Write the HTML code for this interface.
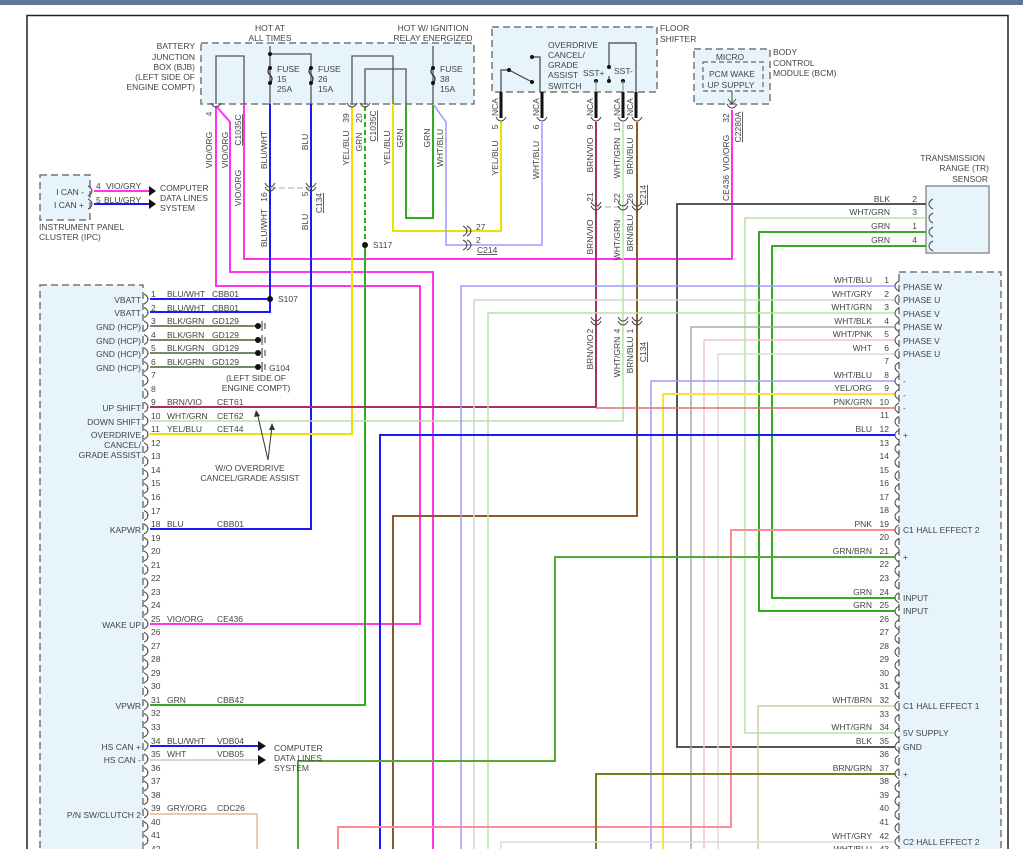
<!DOCTYPE html>
<html><head><meta charset="utf-8"><style>
html,body{margin:0;padding:0;background:#fff;width:1023px;height:849px;overflow:hidden}
svg{display:block}
text{font-family:"Liberation Sans",sans-serif;font-size:8.5px;fill:#444}
.r{text-anchor:end}.m{text-anchor:middle}
.box{fill:#e8f4fb;stroke:#777;stroke-width:1.5;stroke-dasharray:7 4}
.w{fill:none;stroke-width:2}
.br{fill:none;stroke:#444;stroke-width:1}
</style></head><body>
<svg width="1023" height="849" viewBox="0 0 1023 849" xmlns="http://www.w3.org/2000/svg">
<defs>
<path id="bl" d="M-3,-5 q4,2 4,5 q0,3 -4,5 M1,0 h-1" class="br"/>
<path id="brr" d="M3,-5 q-4,2 -4,5 q0,3 4,5" class="br"/>
<path id="bd" d="M-5,-3 q2,4 5,4 q3,0 5,-4" class="br"/>
</defs>
<rect x="0" y="0" width="1023" height="5" fill="#5d7892"/>
<path d="M27,849 V15.5 H1008 V849" fill="none" stroke="#222" stroke-width="1.5"/>

<!-- boxes -->
<rect class="box" x="201" y="43" width="273" height="61"/>
<rect class="box" x="492" y="27" width="165" height="65"/>
<rect class="box" x="694" y="49" width="76" height="55"/>
<rect x="703" y="62" width="60" height="29" fill="none" stroke="#666" stroke-width="1.2" stroke-dasharray="5 3"/>
<rect class="box" x="40" y="175" width="50" height="45"/>
<rect x="926" y="186" width="63" height="67" fill="#e8f4fb" stroke="#777" stroke-width="1.2"/>
<rect class="box" x="40" y="285" width="103" height="580"/>
<rect class="box" x="899" y="272" width="102" height="590"/>

<!-- BJB internals -->
<g fill="none" stroke="#555" stroke-width="1.3">
<path d="M216,104 V56 H244 V104"/>
<path d="M270,46 V104 M270,54 H311 V104"/>
<path d="M352,104 V56 H393 V104 M365,104 V69 H406 V104"/>
<path d="M433,46 V104"/>
<path d="M270,68 q-4,3 0,7 q4,4 0,8 M311,68 q-4,3 0,7 q4,4 0,8 M433,68 q-4,3 0,7 q4,4 0,8" stroke="#333"/>
</g>
<g fill="#111"><circle cx="270" cy="54" r="2"/><circle cx="270" cy="68" r="2"/><circle cx="270" cy="83" r="2"/><circle cx="311" cy="68" r="2"/><circle cx="311" cy="83" r="2"/><circle cx="433" cy="68" r="2"/><circle cx="433" cy="83" r="2"/></g>
<text class="m" x="270" y="31">HOT AT</text><text class="m" x="270" y="41">ALL TIMES</text>
<text class="m" x="433" y="31">HOT W/ IGNITION</text><text class="m" x="433" y="41">RELAY ENERGIZED</text>
<text class="r" x="195" y="49">BATTERY</text><text class="r" x="195" y="60">JUNCTION</text><text class="r" x="195" y="70">BOX (BJB)</text><text class="r" x="195" y="80">(LEFT SIDE OF</text><text class="r" x="195" y="90">ENGINE COMPT)</text>
<text x="277" y="72">FUSE</text><text x="277" y="82">15</text><text x="277" y="92">25A</text>
<text x="318" y="72">FUSE</text><text x="318" y="82">26</text><text x="318" y="92">15A</text>
<text x="440" y="72">FUSE</text><text x="440" y="82">38</text><text x="440" y="92">15A</text>

<!-- Floor shifter -->
<g fill="none" stroke="#444" stroke-width="1.2">
<path d="M501,92 V70 H509 L532,82 M540,92 V57 H532 M609,67 V43 H636 V92 M609,81 V76"/>
</g>
<g fill="#111"><circle cx="509" cy="70" r="2"/><circle cx="532" cy="82" r="2"/><circle cx="532" cy="57" r="2"/><circle cx="609" cy="67" r="2"/><circle cx="609" cy="81" r="2"/><circle cx="596" cy="81" r="2"/><circle cx="623" cy="81" r="2"/></g>
<path d="M596,81 V92 M623,81 V92" stroke="#999" stroke-width="1.2"/>
<text x="660" y="31">FLOOR</text><text x="660" y="42">SHIFTER</text>
<text x="548" y="48">OVERDRIVE</text><text x="548" y="58">CANCEL/</text><text x="548" y="68">GRADE</text><text x="548" y="78">ASSIST</text><text x="548" y="89">SWITCH</text>
<text x="583" y="76">SST+</text><text x="614" y="74">SST-</text>
<g stroke="#111" stroke-width="3"><path d="M501,92 V118 M542,92 V118 M596,92 V118 M623,92 V118 M636,92 V118"/></g>

<!-- BCM -->
<text x="773" y="55">BODY</text><text x="773" y="66">CONTROL</text><text x="773" y="76">MODULE (BCM)</text>
<text class="m" x="730" y="60">MICRO</text><text class="m" x="732" y="77">PCM WAKE</text><text class="m" x="731" y="88">UP SUPPLY</text>
<path d="M732,91 V104 M728,99 L732,104 L736,99" stroke="#444" fill="none"/>

<!-- TR sensor -->
<text class="r" x="985" y="161">TRANSMISSION</text><text class="r" x="989" y="171">RANGE (TR)</text><text class="r" x="988" y="182">SENSOR</text>

<!-- IPC -->
<text class="r" x="84" y="195">I CAN -</text><text class="r" x="84" y="208">I CAN +</text>
<text x="96" y="189">4</text><text x="106" y="189">VIO/GRY</text><text x="96" y="203">5</text><text x="104" y="203">BLU/GRY</text>
<path d="M94,191 H150 M94,204 H150" stroke="#ff33ee" stroke-width="2"/><path d="M94,204 H150" stroke="#1818ff" stroke-width="2"/>
<path d="M149,186 L156,191 L149,196 Z M149,199 L156,204 L149,209 Z" fill="#111"/>
<text x="160" y="191">COMPUTER</text><text x="160" y="201">DATA LINES</text><text x="160" y="211">SYSTEM</text>
<text x="39" y="230">INSTRUMENT PANEL</text><text x="39" y="240">CLUSTER (IPC)</text>

<!-- WIRES -->
<g class="w">
<!-- VIO/ORG -->
<path d="M216,106 V286 H420 V624 H150" stroke="#ff33ee"/>
<path d="M216,106 L230,122 V272 H433 V849" stroke="#ff33ee"/>
<path d="M244,104 V259 H732 V110" stroke="#ff33ee"/>
<!-- BLU/WHT, BLU -->
<path d="M270,104 V299 H150 M270,299 V312 H150" stroke="#1a1aff"/>
<path d="M311,104 V529 H150" stroke="#1a1aff"/>
<!-- YEL/BLU -->
<path d="M352,106 V434 H150" stroke="#f0e000"/>
<path d="M393,104 V231 H501 V122" stroke="#f0e000"/>
<!-- GRN -->
<path d="M365,106 V245" stroke="#33aa22" stroke-dasharray="5 3"/>
<path d="M365,245 V705 H150" stroke="#33aa22"/>
<path d="M406,104 V218 H433 V104" stroke="#33aa22"/>
<!-- WHT/BLU -->
<path d="M433,104 L446,122 V245 H542 V122" stroke="#9b9bff" stroke-width="1.5"/>
<!-- shifter outputs -->
<path d="M596,122 V407 H150" stroke="#a8306a"/>
<path d="M623,122 V421 H150" stroke="#b8e0a8" stroke-width="1.5"/>
<path d="M637,122 V516 H393 V849" stroke="#8a5a2a"/>
<!-- TR -->
<path d="M926,204 H677 V747 H895" stroke="#555"/>
<path d="M926,218 H745 V733 H895" stroke="#b8e0a8" stroke-width="1.5"/>
<path d="M926,232 H759 V611 H895" stroke="#33aa22"/>
<path d="M926,246 H772 V598 H895" stroke="#33aa22"/>
<!-- right connector -->
<path d="M895,286 H461 V849" stroke="#9b9bff" stroke-width="1.5"/>
<path d="M895,300 H474 V849" stroke="#d6d6d6" stroke-width="1.5"/>
<path d="M895,313 H488 V849" stroke="#b8e0a8" stroke-width="1.5"/>
<path d="M895,327 H691 V849" stroke="#aaa" stroke-width="1.5"/>
<path d="M895,340 H704 V849" stroke="#f0c4cc" stroke-width="1.5"/>
<path d="M895,354 H718 V849" stroke="#dcdcdc" stroke-width="1.5"/>
<path d="M895,381 H651 V849" stroke="#9b9bff" stroke-width="1.5"/>
<path d="M895,394 H663 V849" stroke="#ffe040"/>
<path d="M895,408 H596" stroke="#e07070" stroke-width="1.5"/>
<path d="M895,435 H380 V849" stroke="#1a1aff"/>
<path d="M895,530 H731 V827 H338 V849" stroke="#ff8899"/>
<path d="M895,557 H555 V761 H298 V849" stroke="#55aa33"/>
<path d="M895,706 H758 V849" stroke="#cfc8a8" stroke-width="1.5"/>
<path d="M895,774 H596 V849" stroke="#7a7a20"/>
<path d="M895,842 H501 V849" stroke="#dcdcdc" stroke-width="1.5"/>
<!-- left misc -->
<path d="M150,326 H258 M150,340 H258 M150,353 H258 M150,367 H258" stroke="#778866"/>
<path d="M150,746 H258" stroke="#1a1aff"/>
<path d="M150,760 H258" stroke="#d6d6d6"/>
<path d="M150,814 H257 V849" stroke="#f0c8a8"/>
</g>
<path d="M270,188 H311 M596,207 H623" stroke="#bbb" stroke-width="1.2" stroke-dasharray="6 3"/>
<g fill="#111"><circle cx="270" cy="299" r="3"/><circle cx="365" cy="245" r="3"/>
<circle cx="258" cy="326" r="3"/><circle cx="258" cy="340" r="3"/><circle cx="258" cy="353" r="3"/><circle cx="258" cy="367" r="3"/></g>
<path d="M262,321 v10 M265,323 v6 M262,335 v10 M265,337 v6 M262,348 v10 M265,350 v6 M262,362 v10 M265,364 v6" stroke="#333"/>
<path d="M258,741 L266,746 L258,751 Z M258,755 L266,760 L258,765 Z" fill="#111"/>
<text x="278" y="302">S107</text><text x="373" y="248">S117</text>
<text x="269" y="371">G104</text><text class="m" x="256" y="381">(LEFT SIDE OF</text><text class="m" x="256" y="391">ENGINE COMPT)</text>
<text class="m" x="250" y="471">W/O OVERDRIVE</text><text class="m" x="250" y="481">CANCEL/GRADE ASSIST</text>
<path d="M268,460 L257,412 M268,460 L272,426" stroke="#333"/>
<path d="M254,417 L256,410 L260,416 Z M269,430 L272,423 L275,430 Z" fill="#333"/>
<text x="274" y="751">COMPUTER</text><text x="274" y="761">DATA LINES</text><text x="274" y="771">SYSTEM</text>

<!-- connectors -->
<g>
<use href="#bd" x="216" y="106"/><use href="#bd" x="352" y="106"/><use href="#bd" x="365" y="106"/>
<use href="#bd" x="501" y="120"/><use href="#bd" x="542" y="120"/><use href="#bd" x="596" y="120"/><use href="#bd" x="623" y="120"/><use href="#bd" x="637" y="120"/>
<use href="#bd" x="732" y="107"/>
<use href="#bd" x="270" y="186"/><use href="#bd" x="270" y="190"/><use href="#bd" x="311" y="186"/><use href="#bd" x="311" y="190"/>
<use href="#bd" x="596" y="205"/><use href="#bd" x="596" y="209"/><use href="#bd" x="623" y="205"/><use href="#bd" x="623" y="209"/><use href="#bd" x="637" y="205"/><use href="#bd" x="637" y="209"/>
<use href="#bd" x="596" y="320"/><use href="#bd" x="596" y="324"/><use href="#bd" x="623" y="320"/><use href="#bd" x="623" y="324"/><use href="#bd" x="637" y="320"/><use href="#bd" x="637" y="324"/>
<use href="#bl" x="466" y="231"/><use href="#bl" x="470" y="231"/><use href="#bl" x="466" y="245"/><use href="#bl" x="470" y="245"/>
<use href="#brr" x="930" y="204"/><use href="#brr" x="930" y="218"/><use href="#brr" x="930" y="232"/><use href="#brr" x="930" y="246"/>
<use href="#bl" x="91" y="191"/><use href="#bl" x="91" y="204"/>
</g>
<text x="476" y="230">27</text><text x="476" y="243">2</text><text x="477" y="253" text-decoration="underline">C214</text>

<!-- rotated labels -->
<g>
<text transform="rotate(-90 212 114)" x="212" y="114" class="m">4</text>
<text transform="rotate(-90 212 150)" x="212" y="150" class="m">VIO/ORG</text>
<text transform="rotate(-90 228 150)" x="228" y="150" class="m">VIO/ORG</text>
<text transform="rotate(-90 241 130)" x="241" y="130" class="m" text-decoration="underline">C1035C</text>
<text transform="rotate(-90 241 188)" x="241" y="188" class="m">VIO/ORG</text>
<text transform="rotate(-90 267 150)" x="267" y="150" class="m">BLU/WHT</text>
<text transform="rotate(-90 267 197)" x="267" y="197" class="m">16</text>
<text transform="rotate(-90 267 228)" x="267" y="228" class="m">BLU/WHT</text>
<text transform="rotate(-90 308 142)" x="308" y="142" class="m">BLU</text>
<text transform="rotate(-90 308 194)" x="308" y="194" class="m">5</text>
<text transform="rotate(-90 322 203)" x="322" y="203" class="m" text-decoration="underline">C134</text>
<text transform="rotate(-90 308 222)" x="308" y="222" class="m">BLU</text>
<text transform="rotate(-90 349 118)" x="349" y="118" class="m">39</text>
<text transform="rotate(-90 349 148)" x="349" y="148" class="m">YEL/BLU</text>
<text transform="rotate(-90 362 118)" x="362" y="118" class="m">20</text>
<text transform="rotate(-90 362 142)" x="362" y="142" class="m">GRN</text>
<text transform="rotate(-90 376 126)" x="376" y="126" class="m" text-decoration="underline">C1035C</text>
<text transform="rotate(-90 390 148)" x="390" y="148" class="m">YEL/BLU</text>
<text transform="rotate(-90 403 138)" x="403" y="138" class="m">GRN</text>
<text transform="rotate(-90 430 138)" x="430" y="138" class="m">GRN</text>
<text transform="rotate(-90 443 148)" x="443" y="148" class="m">WHT/BLU</text>
<text transform="rotate(-90 498 107)" x="498" y="107" class="m">NCA</text>
<text transform="rotate(-90 498 127)" x="498" y="127" class="m">5</text>
<text transform="rotate(-90 498 158)" x="498" y="158" class="m">YEL/BLU</text>
<text transform="rotate(-90 539 107)" x="539" y="107" class="m">NCA</text>
<text transform="rotate(-90 539 127)" x="539" y="127" class="m">6</text>
<text transform="rotate(-90 539 160)" x="539" y="160" class="m">WHT/BLU</text>
<text transform="rotate(-90 593 107)" x="593" y="107" class="m">NCA</text>
<text transform="rotate(-90 593 127)" x="593" y="127" class="m">9</text>
<text transform="rotate(-90 593 155)" x="593" y="155" class="m">BRN/VIO</text>
<text transform="rotate(-90 593 197)" x="593" y="197" class="m">21</text>
<text transform="rotate(-90 593 237)" x="593" y="237" class="m">BRN/VIO</text>
<text transform="rotate(-90 593 331)" x="593" y="331" class="m">2</text>
<text transform="rotate(-90 593 352)" x="593" y="352" class="m">BRN/VIO</text>
<text transform="rotate(-90 620 107)" x="620" y="107" class="m">NCA</text>
<text transform="rotate(-90 620 127)" x="620" y="127" class="m">10</text>
<text transform="rotate(-90 620 158)" x="620" y="158" class="m">WHT/GRN</text>
<text transform="rotate(-90 620 198)" x="620" y="198" class="m">22</text>
<text transform="rotate(-90 620 240)" x="620" y="240" class="m">WHT/GRN</text>
<text transform="rotate(-90 620 331)" x="620" y="331" class="m">4</text>
<text transform="rotate(-90 620 357)" x="620" y="357" class="m">WHT/GRN</text>
<text transform="rotate(-90 633 107)" x="633" y="107" class="m">NCA</text>
<text transform="rotate(-90 633 127)" x="633" y="127" class="m">8</text>
<text transform="rotate(-90 633 156)" x="633" y="156" class="m">BRN/BLU</text>
<text transform="rotate(-90 633 198)" x="633" y="198" class="m">26</text>
<text transform="rotate(-90 633 233)" x="633" y="233" class="m">BRN/BLU</text>
<text transform="rotate(-90 633 331)" x="633" y="331" class="m">1</text>
<text transform="rotate(-90 633 355)" x="633" y="355" class="m">BRN/BLU</text>
<text transform="rotate(-90 646 195)" x="646" y="195" class="m" text-decoration="underline">C214</text>
<text transform="rotate(-90 646 352)" x="646" y="352" class="m" text-decoration="underline">C134</text>
<text transform="rotate(-90 729 118)" x="729" y="118" class="m">32</text>
<text transform="rotate(-90 741 127)" x="741" y="127" class="m" text-decoration="underline">C2280A</text>
<text transform="rotate(-90 729 153)" x="729" y="153" class="m">VIO/ORG</text>
<text transform="rotate(-90 729 188)" x="729" y="188" class="m">CE436</text>
</g>

<!-- TR pin labels -->
<text class="r" x="890" y="202">BLK</text><text class="r" x="917" y="202">2</text>
<text class="r" x="890" y="215">WHT/GRN</text><text class="r" x="917" y="215">3</text>
<text class="r" x="890" y="229">GRN</text><text class="r" x="917" y="229">1</text>
<text class="r" x="890" y="243">GRN</text><text class="r" x="917" y="243">4</text>

<!-- left pin brackets -->
<g>
<use href="#bl" x="147" y="299"/><use href="#bl" x="147" y="312.5"/><use href="#bl" x="147" y="326"/><use href="#bl" x="147" y="339.6"/><use href="#bl" x="147" y="353.1"/><use href="#bl" x="147" y="366.7"/><use href="#bl" x="147" y="380.2"/><use href="#bl" x="147" y="393.7"/><use href="#bl" x="147" y="407.2"/><use href="#bl" x="147" y="420.8"/><use href="#bl" x="147" y="434.3"/><use href="#bl" x="147" y="447.8"/><use href="#bl" x="147" y="461.4"/><use href="#bl" x="147" y="474.9"/><use href="#bl" x="147" y="488.4"/><use href="#bl" x="147" y="502"/><use href="#bl" x="147" y="515.5"/><use href="#bl" x="147" y="529"/><use href="#bl" x="147" y="542.5"/><use href="#bl" x="147" y="556.1"/><use href="#bl" x="147" y="569.6"/><use href="#bl" x="147" y="583.1"/><use href="#bl" x="147" y="596.7"/><use href="#bl" x="147" y="610.2"/><use href="#bl" x="147" y="623.7"/><use href="#bl" x="147" y="637.3"/><use href="#bl" x="147" y="650.8"/><use href="#bl" x="147" y="664.3"/><use href="#bl" x="147" y="677.8"/><use href="#bl" x="147" y="691.4"/><use href="#bl" x="147" y="704.9"/><use href="#bl" x="147" y="718.4"/><use href="#bl" x="147" y="732"/><use href="#bl" x="147" y="745.5"/><use href="#bl" x="147" y="759"/><use href="#bl" x="147" y="772.6"/><use href="#bl" x="147" y="786.1"/><use href="#bl" x="147" y="799.6"/><use href="#bl" x="147" y="813.1"/><use href="#bl" x="147" y="826.7"/><use href="#bl" x="147" y="840.2"/>
</g>
<g>
<text x="151" y="297">1</text><text x="151" y="311">2</text><text x="151" y="324">3</text><text x="151" y="338">4</text><text x="151" y="351">5</text><text x="151" y="365">6</text><text x="151" y="378">7</text><text x="151" y="392">8</text><text x="151" y="405">9</text><text x="151" y="419">10</text><text x="151" y="432">11</text><text x="151" y="446">12</text><text x="151" y="459">13</text><text x="151" y="473">14</text><text x="151" y="486">15</text><text x="151" y="500">16</text><text x="151" y="514">17</text><text x="151" y="527">18</text><text x="151" y="541">19</text><text x="151" y="554">20</text><text x="151" y="568">21</text><text x="151" y="581">22</text><text x="151" y="595">23</text><text x="151" y="608">24</text><text x="151" y="622">25</text><text x="151" y="635">26</text><text x="151" y="649">27</text><text x="151" y="662">28</text><text x="151" y="676">29</text><text x="151" y="689">30</text><text x="151" y="703">31</text><text x="151" y="716">32</text><text x="151" y="730">33</text><text x="151" y="744">34</text><text x="151" y="757">35</text><text x="151" y="771">36</text><text x="151" y="784">37</text><text x="151" y="798">38</text><text x="151" y="811">39</text><text x="151" y="825">40</text><text x="151" y="838">41</text><text x="151" y="852">42</text>
</g>
<g>
<text x="167" y="297">BLU/WHT</text><text x="212" y="297">CBB01</text>
<text x="167" y="311">BLU/WHT</text><text x="212" y="311">CBB01</text>
<text x="167" y="324">BLK/GRN</text><text x="212" y="324">GD129</text>
<text x="167" y="338">BLK/GRN</text><text x="212" y="338">GD129</text>
<text x="167" y="351">BLK/GRN</text><text x="212" y="351">GD129</text>
<text x="167" y="365">BLK/GRN</text><text x="212" y="365">GD129</text>
<text x="167" y="405">BRN/VIO</text><text x="217" y="405">CET61</text>
<text x="167" y="419">WHT/GRN</text><text x="217" y="419">CET62</text>
<text x="167" y="432">YEL/BLU</text><text x="217" y="432">CET44</text>
<text x="167" y="527">BLU</text><text x="217" y="527">CBB01</text>
<text x="167" y="622">VIO/ORG</text><text x="217" y="622">CE436</text>
<text x="167" y="703">GRN</text><text x="217" y="703">CBB42</text>
<text x="167" y="744">BLU/WHT</text><text x="217" y="744">VDB04</text>
<text x="167" y="757">WHT</text><text x="217" y="757">VDB05</text>
<text x="167" y="811">GRY/ORG</text><text x="217" y="811">CDC26</text>
</g>
<g>
<text class="r" x="141" y="303">VBATT</text><text class="r" x="141" y="316">VBATT</text>
<text class="r" x="141" y="330">GND (HCP)</text><text class="r" x="141" y="344">GND (HCP)</text><text class="r" x="141" y="357">GND (HCP)</text><text class="r" x="141" y="371">GND (HCP)</text>
<text class="r" x="141" y="411">UP SHIFT</text><text class="r" x="141" y="425">DOWN SHIFT</text><text class="r" x="141" y="438">OVERDRIVE</text><text class="r" x="141" y="448">CANCEL/</text><text class="r" x="141" y="458">GRADE ASSIST</text>
<text class="r" x="141" y="533">KAPWR</text><text class="r" x="141" y="628">WAKE UP</text><text class="r" x="141" y="709">VPWR</text>
<text class="r" x="141" y="750">HS CAN +</text><text class="r" x="141" y="763">HS CAN -</text><text class="r" x="141" y="818">P/N SW/CLUTCH 2</text>
</g>

<!-- right pin brackets -->
<g>
<use href="#brr" x="896" y="286"/><use href="#brr" x="896" y="299.6"/><use href="#brr" x="896" y="313.1"/><use href="#brr" x="896" y="326.7"/><use href="#brr" x="896" y="340.2"/><use href="#brr" x="896" y="353.8"/><use href="#brr" x="896" y="367.3"/><use href="#brr" x="896" y="380.9"/><use href="#brr" x="896" y="394.4"/><use href="#brr" x="896" y="408"/><use href="#brr" x="896" y="421.5"/><use href="#brr" x="896" y="435.1"/><use href="#brr" x="896" y="448.6"/><use href="#brr" x="896" y="462.2"/><use href="#brr" x="896" y="475.7"/><use href="#brr" x="896" y="489.3"/><use href="#brr" x="896" y="502.8"/><use href="#brr" x="896" y="516.4"/><use href="#brr" x="896" y="529.9"/><use href="#brr" x="896" y="543.5"/><use href="#brr" x="896" y="557"/><use href="#brr" x="896" y="570.6"/><use href="#brr" x="896" y="584.1"/><use href="#brr" x="896" y="597.7"/><use href="#brr" x="896" y="611.2"/><use href="#brr" x="896" y="624.8"/><use href="#brr" x="896" y="638.3"/><use href="#brr" x="896" y="651.9"/><use href="#brr" x="896" y="665.4"/><use href="#brr" x="896" y="679"/><use href="#brr" x="896" y="692.5"/><use href="#brr" x="896" y="706.1"/><use href="#brr" x="896" y="719.6"/><use href="#brr" x="896" y="733.2"/><use href="#brr" x="896" y="746.7"/><use href="#brr" x="896" y="760.3"/><use href="#brr" x="896" y="773.8"/><use href="#brr" x="896" y="787.4"/><use href="#brr" x="896" y="800.9"/><use href="#brr" x="896" y="814.5"/><use href="#brr" x="896" y="828"/><use href="#brr" x="896" y="841.6"/>
</g>
<g class="r">
<text class="r" x="889" y="283">1</text><text class="r" x="889" y="297">2</text><text class="r" x="889" y="310">3</text><text class="r" x="889" y="324">4</text><text class="r" x="889" y="337">5</text><text class="r" x="889" y="351">6</text><text class="r" x="889" y="364">7</text><text class="r" x="889" y="378">8</text><text class="r" x="889" y="391">9</text><text class="r" x="889" y="405">10</text><text class="r" x="889" y="418">11</text><text class="r" x="889" y="432">12</text><text class="r" x="889" y="446">13</text><text class="r" x="889" y="459">14</text><text class="r" x="889" y="473">15</text><text class="r" x="889" y="486">16</text><text class="r" x="889" y="500">17</text><text class="r" x="889" y="513">18</text><text class="r" x="889" y="527">19</text><text class="r" x="889" y="540">20</text><text class="r" x="889" y="554">21</text><text class="r" x="889" y="567">22</text><text class="r" x="889" y="581">23</text><text class="r" x="889" y="595">24</text><text class="r" x="889" y="608">25</text><text class="r" x="889" y="622">26</text><text class="r" x="889" y="635">27</text><text class="r" x="889" y="649">28</text><text class="r" x="889" y="662">29</text><text class="r" x="889" y="676">30</text><text class="r" x="889" y="689">31</text><text class="r" x="889" y="703">32</text><text class="r" x="889" y="717">33</text><text class="r" x="889" y="730">34</text><text class="r" x="889" y="744">35</text><text class="r" x="889" y="757">36</text><text class="r" x="889" y="771">37</text><text class="r" x="889" y="784">38</text><text class="r" x="889" y="798">39</text><text class="r" x="889" y="811">40</text><text class="r" x="889" y="825">41</text><text class="r" x="889" y="839">42</text><text class="r" x="889" y="852">43</text>
<text class="r" x="872" y="283">WHT/BLU</text><text class="r" x="872" y="297">WHT/GRY</text><text class="r" x="872" y="310">WHT/GRN</text><text class="r" x="872" y="324">WHT/BLK</text><text class="r" x="872" y="337">WHT/PNK</text><text class="r" x="872" y="351">WHT</text>
<text class="r" x="872" y="378">WHT/BLU</text><text class="r" x="872" y="391">YEL/ORG</text><text class="r" x="872" y="405">PNK/GRN</text><text class="r" x="872" y="432">BLU</text>
<text class="r" x="872" y="527">PNK</text><text class="r" x="872" y="554">GRN/BRN</text><text class="r" x="872" y="595">GRN</text><text class="r" x="872" y="608">GRN</text>
<text class="r" x="872" y="703">WHT/BRN</text><text class="r" x="872" y="730">WHT/GRN</text><text class="r" x="872" y="744">BLK</text><text class="r" x="872" y="771">BRN/GRN</text><text class="r" x="872" y="839">WHT/GRY</text><text class="r" x="872" y="852">WHT/BLU</text>
</g>
<g>
<text x="903" y="290">PHASE W</text><text x="903" y="303">PHASE U</text><text x="903" y="317">PHASE V</text><text x="903" y="330">PHASE W</text><text x="903" y="344">PHASE V</text><text x="903" y="357">PHASE U</text>
<text x="903" y="384">-</text><text x="903" y="398">-</text><text x="903" y="411">-</text><text x="903" y="438">+</text>
<text x="903" y="533">C1 HALL EFFECT 2</text><text x="903" y="560">+</text><text x="903" y="601">INPUT</text><text x="903" y="614">INPUT</text>
<text x="903" y="709">C1 HALL EFFECT 1</text><text x="903" y="736">5V SUPPLY</text><text x="903" y="750">GND</text><text x="903" y="777">+</text><text x="903" y="845">C2 HALL EFFECT 2</text>
</g>
</svg>
</body></html>
